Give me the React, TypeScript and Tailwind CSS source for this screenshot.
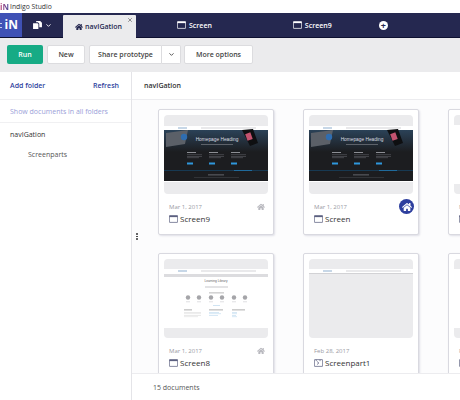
import { ChevronDown, X } from 'lucide-react';
import { FaHome } from 'react-icons/fa';

const font = { fontFamily: '"Open Sans", "Noto Sans", sans-serif' };

const ScreenIcon = ({ className = '' }: { className?: string }) => (
  <svg viewBox="0 0 12 10" className={className} fill="none" stroke="currentColor">
    <rect x="0.5" y="0.5" width="11" height="9" rx="0.5" />
    <rect x="0.5" y="0.5" width="11" height="2" fill="currentColor" stroke="none" />
  </svg>
);

const PartIcon = ({ className = '' }: { className?: string }) => (
  <svg viewBox="0 0 12 10" className={className} fill="none" stroke="currentColor">
    <rect x="0.5" y="0.5" width="11" height="9" rx="0.5" />
    <path d="M4 3l2.5 2L4 7M8 0.5v2M3 0.5v2" />
  </svg>
);

const DocsIcon = () => (
  <svg viewBox="0 0 10 9" className="w-[9px] h-[8px]" fill="white">
    <path d="M0 2.5h5l1 1V9H0z" />
    <path d="M3.5 0H8l2 2v5H7V3L5.5 1.500h-2z" />
  </svg>
);

const HeroThumb = () => (
  <svg viewBox="0 0 104 79" className="block w-[104px] h-[79px] rounded-sm">
    <defs>
      <linearGradient id="fade" x1="0" y1="0" x2="0" y2="1">
        <stop offset="0" stopColor="#2b4258" />
        <stop offset="1" stopColor="#1c1d20" />
      </linearGradient>
    </defs>
    <rect width="104" height="79" fill="#ebebed" />
    <rect y="11" width="104" height="4" fill="#fff" />
    <rect x="14" y="12.500" width="9" height="1" fill="#8fb0cf" />
    <rect x="37" y="12.500" width="55" height="1" fill="#d4d4d8" />
    <rect y="15" width="104" height="51" fill="#1c1d20" />
    <rect y="15" width="104" height="22" fill="url(#fade)" />
    <path d="M2 18l22-3-3 14-19 3z" fill="#5b6068" />
    <circle cx="20" cy="22" r="3.200" fill="#2f6db0" />
    <path d="M78 15l11-1 5 14-8 3z" fill="#0e0f11" />
    <rect x="82" y="18" width="5.500" height="7" fill="#c3536f" transform="rotate(-20 85 21)" />
    <text x="53" y="26" fontSize="4.800" fill="#d8dce2" textAnchor="middle" style={{ fontFamily: '"Liberation Sans", sans-serif' }}>Homepage Heading</text>
    <rect x="37" y="29" width="32" height="0.800" fill="#6d7178" />
    {[23, 45, 67].map((x) => (
      <g key={x}>
        <rect x={x} y="37" width="9" height="0.800" fill="#a9acb2" />
        <rect x={x} y="39.500" width="15" height="0.600" fill="#5a5d63" />
        <rect x={x} y="41" width="15" height="0.600" fill="#5a5d63" />
        <rect x={x} y="42.500" width="12" height="0.600" fill="#5a5d63" />
        <rect x={x} y="47.500" width="6" height="2" fill="#2e97dc" />
      </g>
    ))}
    <rect y="55" width="104" height="0.800" fill="#17425f" />
    <rect x="70" y="55" width="18" height="0.800" fill="#2277b0" />
    <rect x="44" y="59.500" width="16" height="0.800" fill="#74777d" />
    <rect x="30" y="62" width="45" height="0.700" fill="#3c3e43" />
    <rect y="66" width="104" height="1" fill="#fff" />
  </svg>
);

const LibraryThumb = () => (
  <svg viewBox="0 0 104 79" className="block w-[104px] h-[79px] rounded-sm">
    <rect width="104" height="79" fill="#ebebed" />
    <rect y="10" width="104" height="59" fill="#fff" />
    <rect x="14" y="11.500" width="9" height="1" fill="#8fb0cf" />
    <rect x="37" y="11.500" width="55" height="1" fill="#d4d4d8" />
    <rect y="15" width="104" height="3" fill="#dcdcdf" />
    <text x="52" y="23" fontSize="3.200" fill="#666" textAnchor="middle" style={{ fontFamily: '"Liberation Sans", sans-serif' }}>Learning Library</text>
    <rect x="41" y="27.500" width="23" height="1" fill="#c8c8cc" />
    <rect x="45" y="33.500" width="15" height="0.800" fill="#aaa" />
    {[24, 35, 47, 58, 70, 81].map((x) => (
      <g key={x}>
        <circle cx={x} cy="38.500" r="2.200" fill="#a5a5a9" />
        <rect x={x - 2} y="42.500" width="4" height="0.700" fill="#d2d2d5" />
      </g>
    ))}
    <rect x="49" y="46" width="7" height="0.700" fill="#bcd9ee" />
    <rect x="20" y="50.500" width="8" height="0.800" fill="#999" />
    <rect x="20" y="53" width="17" height="0.600" fill="#ddd" />
    <rect x="20" y="54.500" width="17" height="0.600" fill="#ddd" />
    <rect x="20" y="56" width="17" height="0.600" fill="#ddd" />
    <rect x="20" y="57.500" width="14" height="0.600" fill="#ddd" />
    <rect x="45" y="50.500" width="14" height="0.800" fill="#999" />
    <rect x="45" y="53" width="10" height="0.600" fill="#bcd9ee" />
    <rect x="45" y="54.500" width="12" height="0.600" fill="#bcd9ee" />
    <rect x="45" y="56" width="9" height="0.600" fill="#bcd9ee" />
    <rect x="68" y="50.500" width="13" height="0.800" fill="#999" />
    <rect x="68" y="53" width="5" height="0.600" fill="#bcd9ee" />
    <rect x="68" y="54.500" width="5" height="0.600" fill="#bcd9ee" />
    <rect x="68" y="56" width="4" height="0.600" fill="#bcd9ee" />
    <rect x="68" y="57.500" width="5" height="0.600" fill="#bcd9ee" />
  </svg>
);

const BlankThumb = () => (
  <svg viewBox="0 0 104 79" className="block w-[104px] h-[79px] rounded-sm">
    <rect width="104" height="79" fill="#ebebed" />
    <rect y="10" width="104" height="4" fill="#fff" />
    <rect x="14" y="11.500" width="9" height="1" fill="#8fb0cf" />
    <rect x="37" y="11.500" width="55" height="1" fill="#d4d4d8" />
    <rect y="14" width="104" height="1" fill="#d2d2d5" />
  </svg>
);

const WhiteThumb = () => (
  <svg viewBox="0 0 104 79" className="block w-[104px] h-[79px] rounded-sm">
    <rect width="104" height="79" fill="#ebebed" />
    <rect y="10" width="104" height="59" fill="#fff" />
  </svg>
);

type DocCard = {
  date: string;
  name: string;
  thumb: React.ReactNode;
  home?: 'off' | 'on';
  part?: boolean;
};

const cards: DocCard[] = [
  { date: 'Mar 1, 2017', name: 'Screen9', thumb: <HeroThumb />, home: 'off' },
  { date: 'Mar 1, 2017', name: 'Screen', thumb: <HeroThumb />, home: 'on' },
  { date: 'Mar 1, 2017', name: 'Screen7', thumb: <WhiteThumb /> },
  { date: 'Mar 1, 2017', name: 'Screen8', thumb: <LibraryThumb />, home: 'off' },
  { date: 'Feb 28, 2017', name: 'Screenpart1', thumb: <BlankThumb />, part: true },
  { date: 'Feb 28, 2017', name: 'Screenpart2', thumb: <WhiteThumb />, part: true },
];

const Card = ({ card }: { card: DocCard }) => (
  <div className="relative w-[116px] h-[126px] shrink-0 bg-white rounded-[2px] border border-[#d9d9e0] shadow-[1px_1px_2px_rgba(60,60,110,0.15)] p-[5px]">
    {card.thumb}
    <div className="pl-[5px] mt-[8px]">
      <div className="text-[6px] leading-[11px] text-[#9a9aa3] whitespace-nowrap">{card.date}</div>
      <div className="flex items-center gap-[2px] text-[8px] leading-[12px] text-[#333] whitespace-nowrap">
        {card.part ? <PartIcon className="w-[9px] h-[8px] text-[#5c6080]" /> : <ScreenIcon className="w-[9px] h-[8px] text-[#5c6080]" />}
        {card.name}
      </div>
    </div>
    {card.home === 'off' && (
      <FaHome className="absolute right-[8px] top-[93px] w-[8px] h-[8px] text-[#b9b9bf]" />
    )}
    {card.home === 'on' && (
      <div className="absolute right-[4px] top-[89px] w-[15px] h-[15px] rounded-full bg-[#2e3f9e] flex items-center justify-center">
        <FaHome className="w-[10px] h-[10px] text-white" />
      </div>
    )}
  </div>
);

const Tab = ({ label, className }: { label: string; className: string }) => (
  <div className={`flex items-center gap-[3px] text-[7px] font-semibold text-white ${className}`}>
    <ScreenIcon className="w-[9px] h-[8px] text-white" />
    <span className="pt-[2px]">{label}</span>
  </div>
);

export default function App() {
  return (
    <div style={font} className="w-[460px] h-[400px] overflow-hidden flex flex-col bg-white">
      {/* title bar */}
      <div className="h-[13px] flex items-center shrink-0">
        <span className="w-[10px] text-[8px] font-bold leading-none bg-gradient-to-r from-[#c2407a] to-[#2e3f9e] bg-clip-text text-transparent">iN</span>
        <span className="text-[6.8px] pt-px text-[#333]">Indigo Studio</span>
      </div>

      {/* tabs */}
      <div className="h-[25px] shrink-0 flex bg-[#252850] border-b border-[#0e1030]">
        <div className="relative w-[22px] bg-[#3f51b5] flex items-center justify-end pr-[4px] text-white text-[12px] font-bold leading-none">
          <span className="absolute left-0 top-[10px] w-[2px] h-[5px] border-y border-white/70" />
          iN
        </div>
        <div className="w-[41px] flex items-center justify-center gap-[3px] text-white">
          <DocsIcon />
          <ChevronDown className="w-[7px] h-[7px]" strokeWidth={3} />
        </div>
        <div className="relative w-[73px] h-[23px] mt-[2px] bg-[#ebebed] rounded-t-[1px] flex items-center pl-[12px] gap-[2px] text-[7px] font-semibold text-[#252850]">
          <FaHome className="w-[8px] h-[8px]" />
          <span className="pt-px">navIGation</span>
          <X className="absolute right-[3px] top-[2px] w-[6px] h-[6px] text-[#555]" strokeWidth={2.5} />
        </div>
        <Tab label="Screen" className="ml-[41px]" />
        <Tab label="Screen9" className="ml-[81px]" />
        <div className="ml-[47px] flex items-center">
          <div className="w-[9px] h-[9px] rounded-full bg-white flex items-center justify-center text-[#252850] text-[9px] font-bold leading-none">+</div>
        </div>
      </div>

      {/* toolbar */}
      <div className="h-[34px] shrink-0 bg-[#ebebed] flex items-center pl-[7px] pb-[1px] gap-[4px] text-[7px] font-semibold text-[#444]">
        <div className="w-[36px] h-[19px] pt-px rounded-[2px] bg-[#16ab85] text-white flex items-center justify-center">Run</div>
        <div className="w-[38px] h-[19px] pt-px rounded-[2px] bg-white border border-[#dcdcdf] flex items-center justify-center">New</div>
        <div className="flex">
          <div className="w-[73px] h-[19px] pt-px rounded-l-[2px] bg-white border border-[#dcdcdf] flex items-center justify-center">Share prototype</div>
          <div className="w-[19px] h-[19px] rounded-r-[2px] bg-white border border-l-0 border-[#dcdcdf] flex items-center justify-center">
            <ChevronDown className="w-[7px] h-[7px]" strokeWidth={3} />
          </div>
        </div>
        <div className="w-[69px] h-[19px] pt-px -ml-[1px] rounded-[2px] bg-white border border-[#dcdcdf] flex items-center justify-center">More options</div>
      </div>

      {/* body */}
      <div className="flex-1 min-h-0 flex">
        <aside className="w-[132px] shrink-0 border-r border-[#e4e4e8] bg-white text-[7px]">
          <div className="h-[28px] pl-[10px] pr-[12px] pt-[2px] flex items-center justify-between font-semibold text-[#2f3f9e] border-b border-[#f0f0f2]">
            <span>Add folder</span>
            <span>Refresh</span>
          </div>
          <div className="h-[23px] px-[10px] pt-[2px] flex items-center text-[#9aa0d8] border-b border-[#f0f0f2] whitespace-nowrap">Show documents in all folders</div>
          <div className="mt-[2px] px-[10px] leading-[20px] font-medium text-[#333]">navIGation</div>
          <div className="px-[28px] leading-[20px] text-[#555]">Screenparts</div>
        </aside>

        <main className="relative flex-1 min-w-0 flex flex-col bg-white">
          <div className="absolute left-[4px] top-[161px] flex flex-col gap-[1px]">
            <span className="w-[1.5px] h-[1.5px] rounded-full bg-[#333]" />
            <span className="w-[1.5px] h-[1.5px] rounded-full bg-[#333]" />
            <span className="w-[1.5px] h-[1.5px] rounded-full bg-[#333]" />
          </div>
          <div className="h-[28px] shrink-0 flex items-center pl-[12px] pt-[2px] text-[7px] font-semibold text-[#333] border-b border-[#ececef]">navIGation</div>
          <div className="flex-1 min-h-0 overflow-hidden bg-[#fcfcfd] pl-[26px] pt-[9px]">
            <div className="w-[440px] flex flex-wrap gap-x-[29px] gap-y-[18px]">
              {cards.map((card) => (
                <Card key={card.name} card={card} />
              ))}
            </div>
          </div>
          <div className="h-[27px] shrink-0 bg-white border-t border-[#ececef] flex items-center pl-[21px] pt-[2px] text-[7px] text-[#555]">15 documents</div>
        </main>
      </div>
    </div>
  );
}
